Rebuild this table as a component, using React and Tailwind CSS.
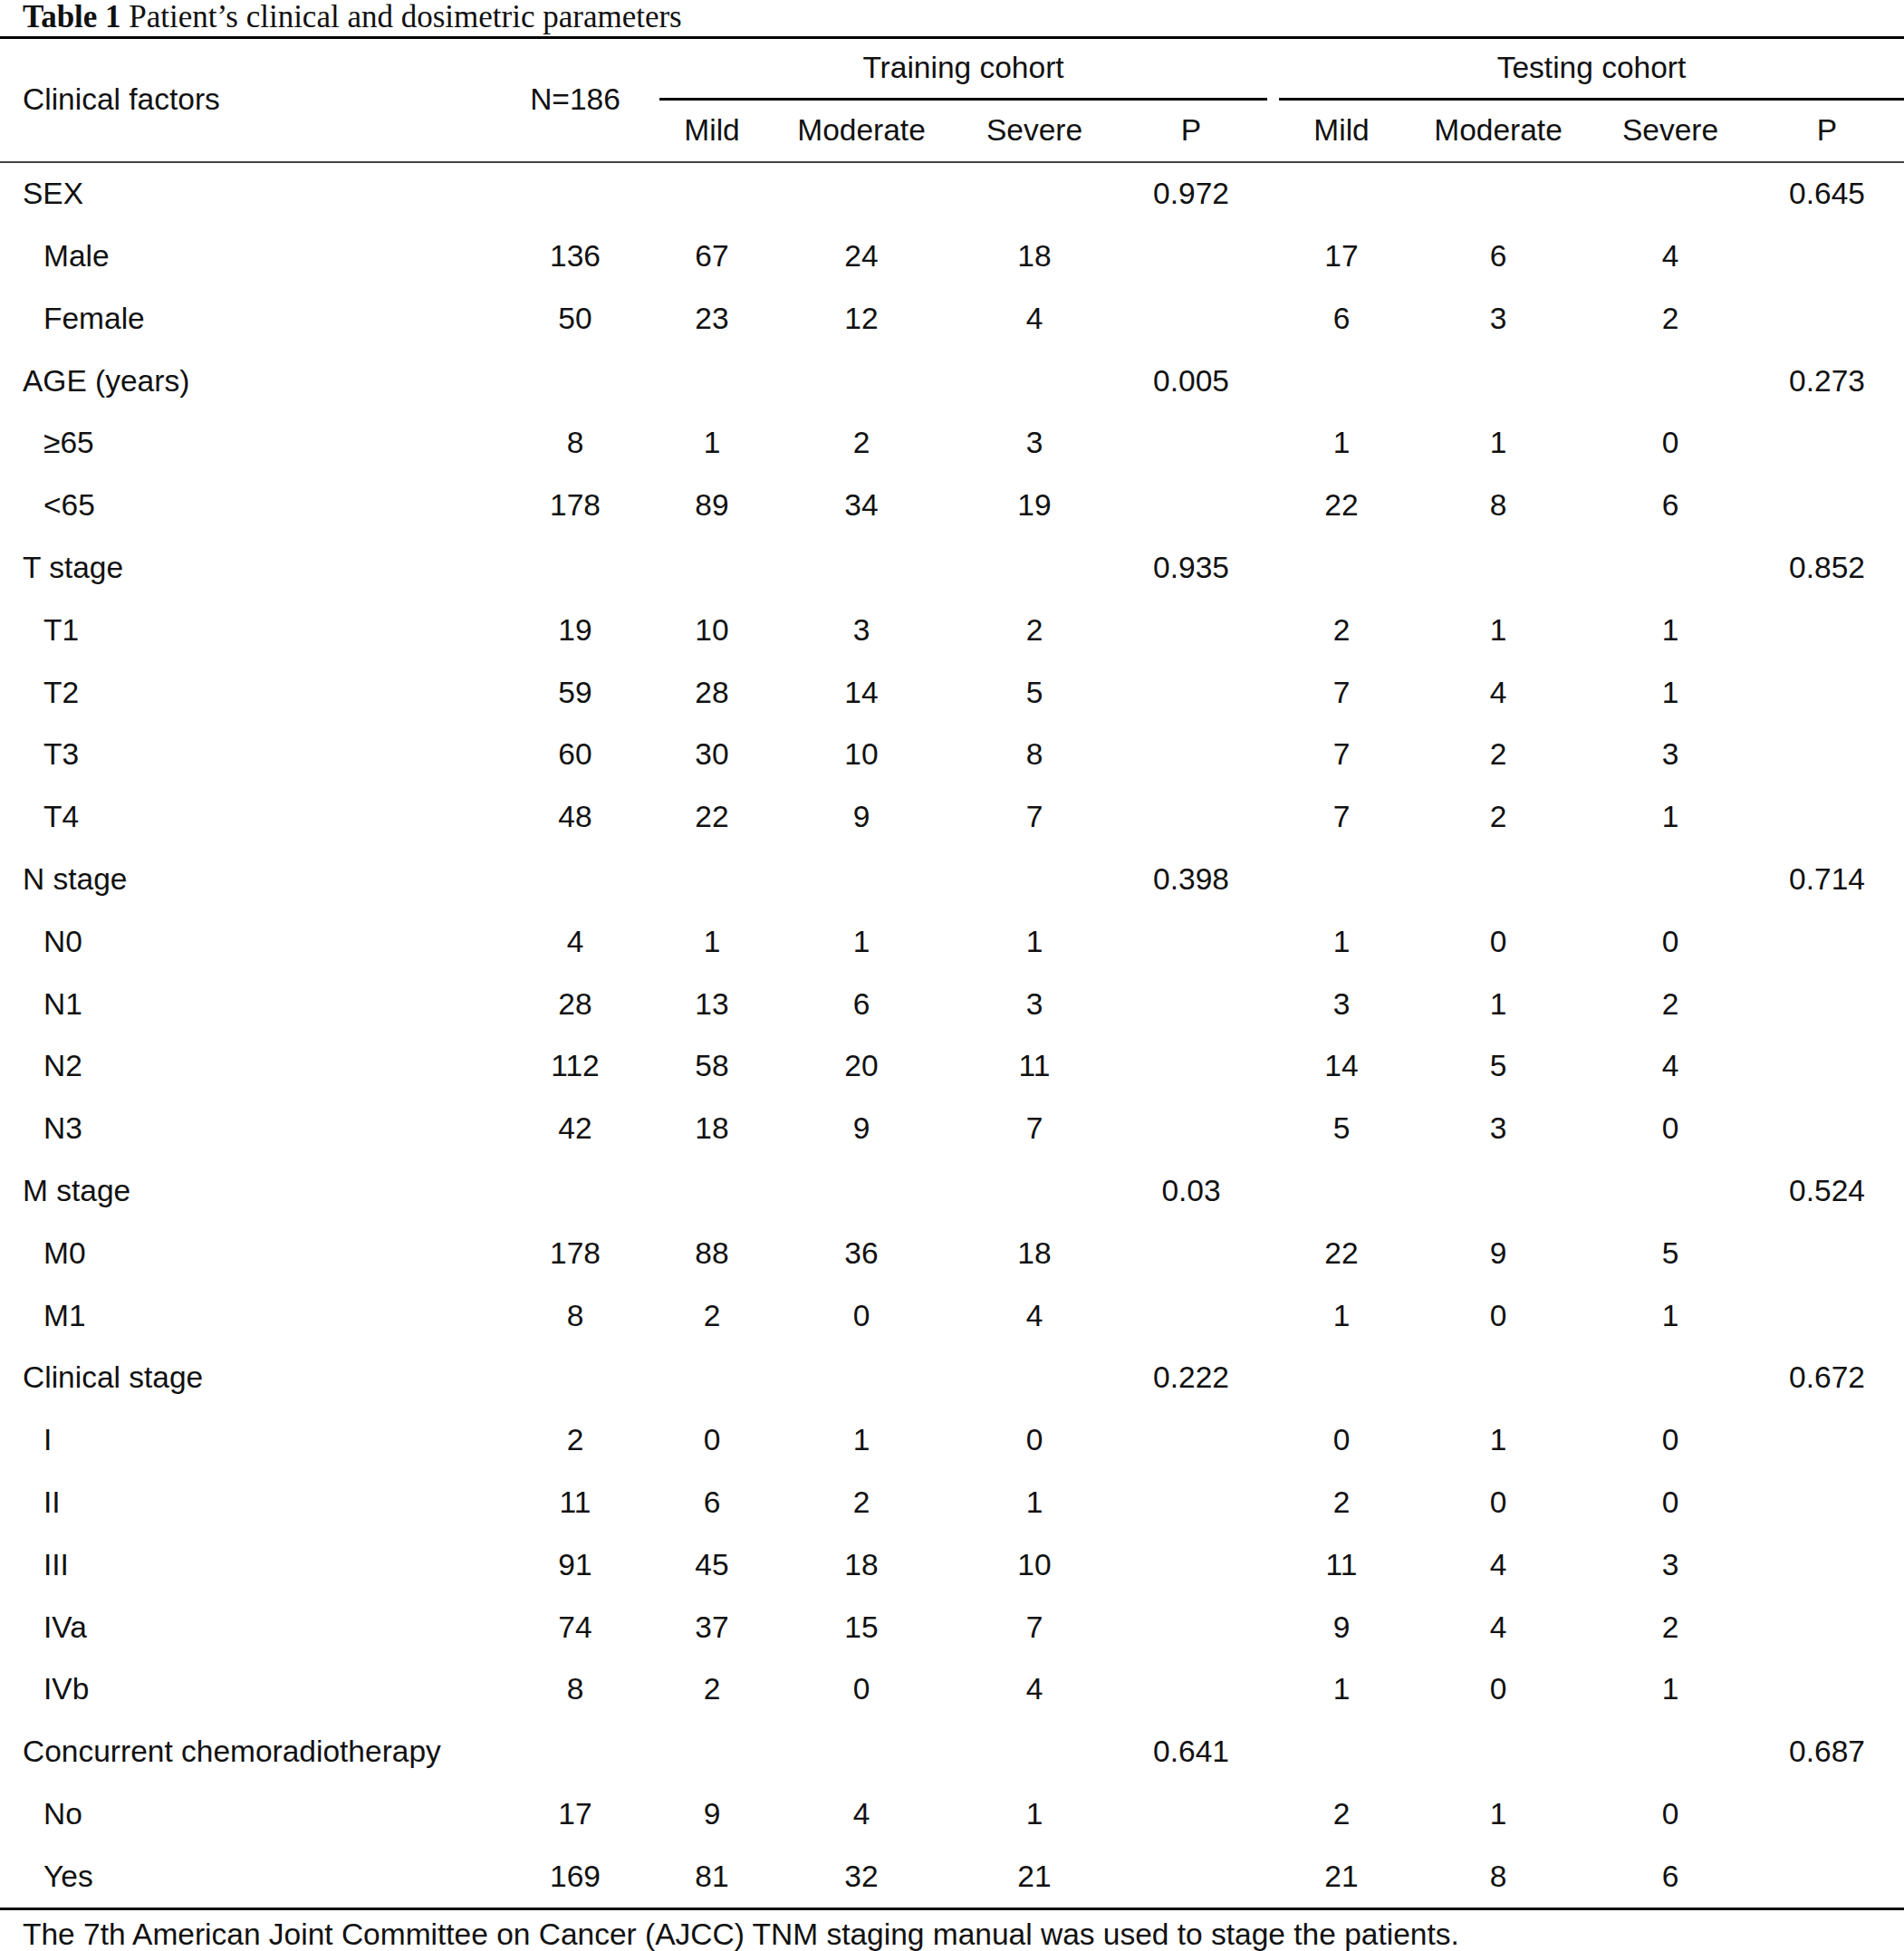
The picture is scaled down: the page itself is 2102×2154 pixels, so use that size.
const rows = [
  { l: "SEX", h: true, p1: "0.972", p2: "0.645" },
  { l: "Male", v: ["136", "67", "24", "18", "17", "6", "4"] },
  { l: "Female", v: ["50", "23", "12", "4", "6", "3", "2"] },
  { l: "AGE (years)", h: true, p1: "0.005", p2: "0.273" },
  { l: "≥65", v: ["8", "1", "2", "3", "1", "1", "0"] },
  { l: "<65", v: ["178", "89", "34", "19", "22", "8", "6"] },
  { l: "T stage", h: true, p1: "0.935", p2: "0.852" },
  { l: "T1", v: ["19", "10", "3", "2", "2", "1", "1"] },
  { l: "T2", v: ["59", "28", "14", "5", "7", "4", "1"] },
  { l: "T3", v: ["60", "30", "10", "8", "7", "2", "3"] },
  { l: "T4", v: ["48", "22", "9", "7", "7", "2", "1"] },
  { l: "N stage", h: true, p1: "0.398", p2: "0.714" },
  { l: "N0", v: ["4", "1", "1", "1", "1", "0", "0"] },
  { l: "N1", v: ["28", "13", "6", "3", "3", "1", "2"] },
  { l: "N2", v: ["112", "58", "20", "11", "14", "5", "4"] },
  { l: "N3", v: ["42", "18", "9", "7", "5", "3", "0"] },
  { l: "M stage", h: true, p1: "0.03", p2: "0.524" },
  { l: "M0", v: ["178", "88", "36", "18", "22", "9", "5"] },
  { l: "M1", v: ["8", "2", "0", "4", "1", "0", "1"] },
  { l: "Clinical stage", h: true, p1: "0.222", p2: "0.672" },
  { l: "I", v: ["2", "0", "1", "0", "0", "1", "0"] },
  { l: "II", v: ["11", "6", "2", "1", "2", "0", "0"] },
  { l: "III", v: ["91", "45", "18", "10", "11", "4", "3"] },
  { l: "IVa", v: ["74", "37", "15", "7", "9", "4", "2"] },
  { l: "IVb", v: ["8", "2", "0", "4", "1", "0", "1"] },
  { l: "Concurrent chemoradiotherapy", h: true, p1: "0.641", p2: "0.687" },
  { l: "No", v: ["17", "9", "4", "1", "2", "1", "0"] },
  { l: "Yes", v: ["169", "81", "32", "21", "21", "8", "6"] },
];

function Row({ r }) {
  const cells = r.h
    ? ["", "", "", "", r.p1, "", "", "", r.p2]
    : [r.v[0], r.v[1], r.v[2], r.v[3], "", r.v[4], r.v[5], r.v[6], ""];
  const widths = [
    "w-[150px]",
    "w-[152px]",
    "w-[178px]",
    "w-[204px]",
    "w-[142px]",
    "w-[190px]",
    "w-[156px]",
    "w-[224px]",
    "w-[122px]",
  ];
  return (
    <div className="flex h-[68.8px] items-center">
      <div className={"w-[560px] whitespace-nowrap " + (r.h ? "pl-[25px]" : "pl-[48px]")}>{r.l}</div>
      {cells.map((c, i) => (
        <div key={i} className={widths[i] + " shrink-0 text-center"}>
          {c}
        </div>
      ))}
    </div>
  );
}

export default function App() {
  return (
    <div
      className="w-[2102px] h-[2154px] bg-white text-[#111] overflow-hidden"
      style={{ fontFamily: '"Liberation Sans", Arial, sans-serif' }}
    >
      <div
        className="h-[40px] pl-[25px] text-[35px] leading-[38px] whitespace-nowrap"
        style={{ fontFamily: '"Liberation Serif", "Times New Roman", serif' }}
      >
        <span className="font-bold">Table 1</span> Patient’s clinical and dosimetric parameters
      </div>
      <div className="text-[33.5px]">
        <div className="border-t-[3px] border-black flex border-b-2 border-b-[#444]">
          <div className="w-[710px] flex items-center shrink-0">
            <div className="w-[560px] pl-[25px]">Clinical factors</div>
            <div className="w-[150px] text-center">N=186</div>
          </div>
          <div className="flex-1 flex flex-col">
            <div className="flex h-[68px]">
              <div className="ml-[18px] w-[671px] border-b-[3px] border-black flex items-center justify-center">
                Training cohort
              </div>
              <div className="ml-[13px] flex-1 border-b-[3px] border-black flex items-center justify-center">
                Testing cohort
              </div>
            </div>
            <div className="flex h-[67px] items-center">
              <div className="w-[152px] text-center">Mild</div>
              <div className="w-[178px] text-center">Moderate</div>
              <div className="w-[204px] text-center">Severe</div>
              <div className="w-[142px] text-center">P</div>
              <div className="w-[190px] text-center">Mild</div>
              <div className="w-[156px] text-center">Moderate</div>
              <div className="w-[224px] text-center">Severe</div>
              <div className="w-[122px] text-center">P</div>
            </div>
          </div>
        </div>
        <div className="border-b-[3px] border-black">
          {rows.map((r, i) => (
            <Row key={i} r={r} />
          ))}
        </div>
        <div className="h-[54px] flex items-center pl-[25px] whitespace-nowrap">
          The 7th American Joint Committee on Cancer (AJCC) TNM staging manual was used to stage the patients.
        </div>
      </div>
    </div>
  );
}
